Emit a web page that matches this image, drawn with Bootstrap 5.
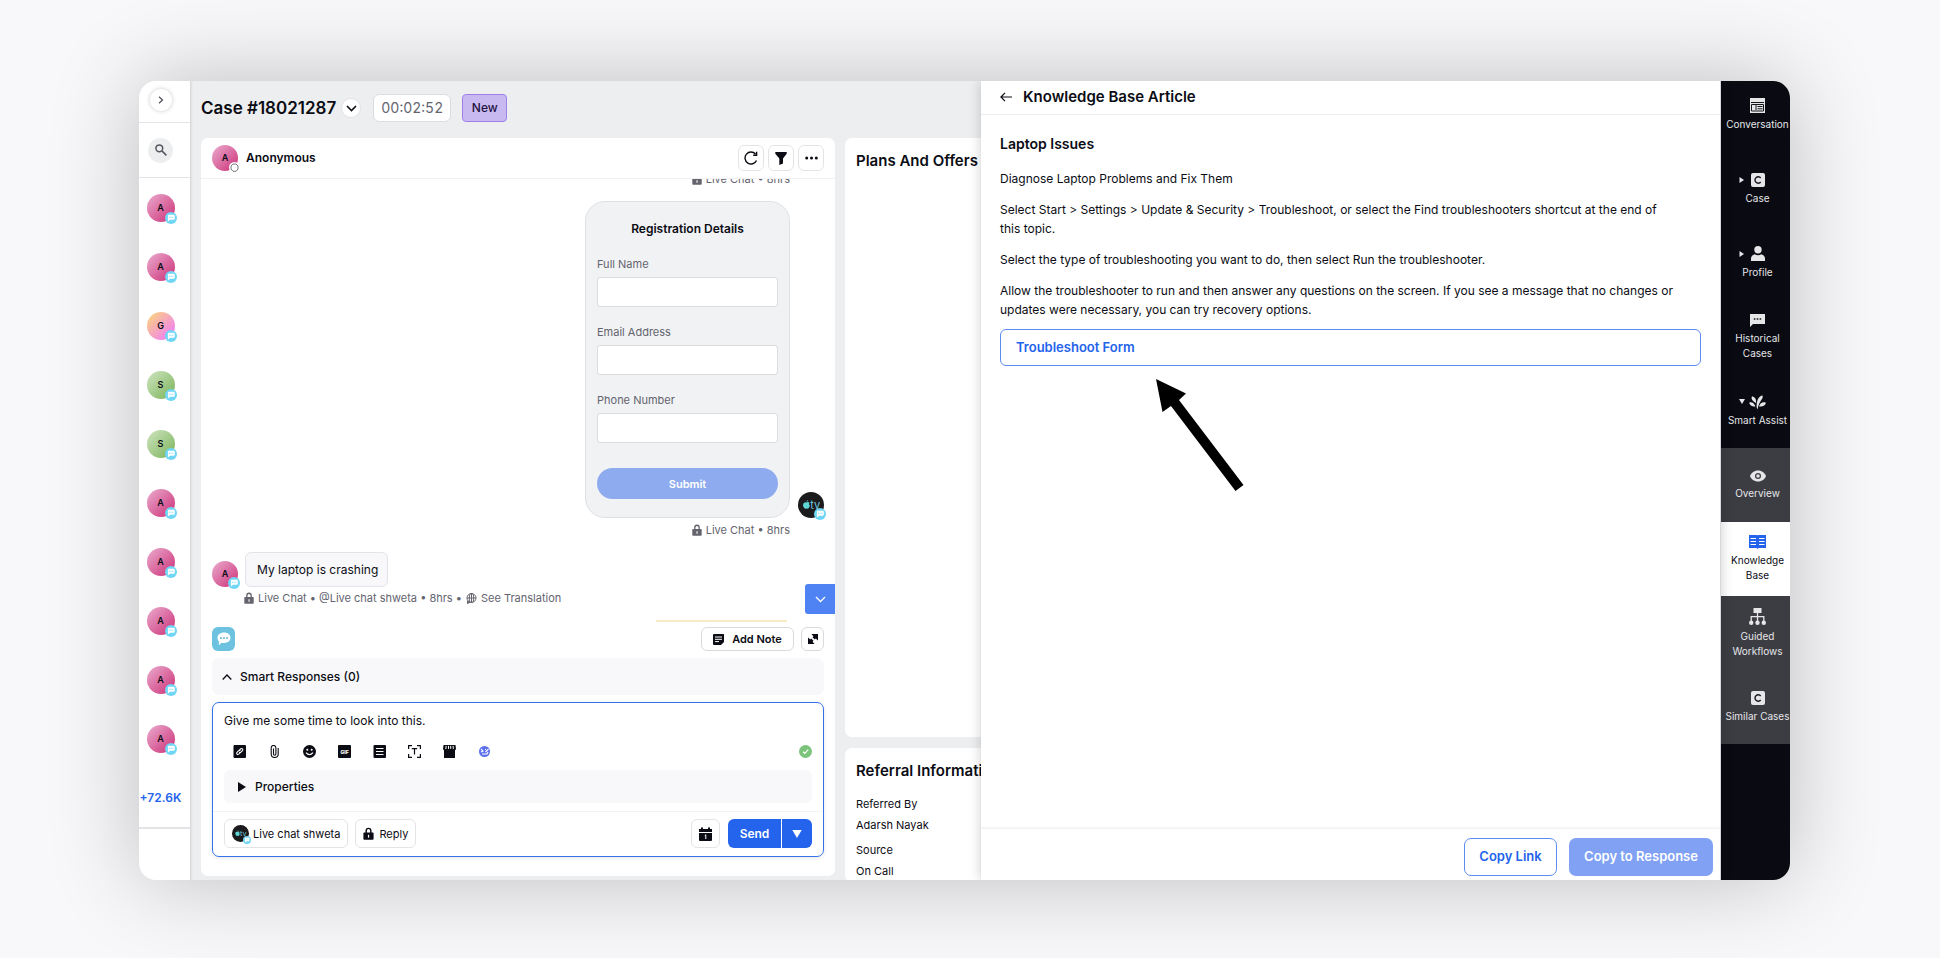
<!DOCTYPE html>
<html lang="en">
<head>
<meta charset="utf-8">
<meta name="viewport" content="width=device-width, initial-scale=1">
<title>Case #18021287</title>
<link href="https://cdn.jsdelivr.net/npm/bootstrap@5.3.0/dist/css/bootstrap.min.css" rel="stylesheet">
<style>
  :root { --ink:#0b0c14; --muted-ink:#64646f; --brand:#2463eb; --line:#e4e4e7; --canvas:#edeef0; --soft:#f8f8fa; }
  body { font-family:Inter,"Liberation Sans",sans-serif; font-size:12px; line-height:18px; color:var(--ink); background:#f8f8fa; }
  button, input, textarea { font-family:inherit; color:inherit; }
  svg { display:block; fill:currentColor; flex:none; }
  .stage { height:100vh; min-height:880px; padding:81px 150px 78px 139px; }
  .frame { border-radius:17px; box-shadow:0 0 90px rgba(0,0,0,.24); background:#fff; }
  .frame-inner { border-radius:17px; }

  /* queue rail */
  .queue { width:51px; flex:none; }
  .queue-top { height:42px; border-bottom:1px solid var(--line); padding-right:8px; }
  .queue-search { height:55px; border-bottom:1px solid var(--line); padding-right:8px; }
  .round-btn { border:0; padding:0; border-radius:50%; display:flex; align-items:center; justify-content:center; background:#fff; }
  .queue-toggle { width:22px; height:22px; box-shadow:0 0 4px rgba(0,0,0,.22); margin-top:-4px; color:#55565f; }
  .search-btn { width:25px; height:25px; background:var(--canvas); color:#55565f; }
  .queue-list { gap:31px; padding:16px 8px 0 0; }
  .queue-more { color:var(--brand); font-weight:600; font-size:12px; margin:36px 8px 0 0; text-decoration:none; }
  .queue-end { border-top:2px solid var(--line); height:53px; }

  .face { width:28px; height:28px; border-radius:50%; font-weight:600; font-size:9px; line-height:28px; text-align:center; position:relative; flex:none; border:0; padding:0; }
  .face-md { width:26px; height:26px; line-height:26px; }
  .face-sm { width:17px; height:17px; }
  .face-a { background:linear-gradient(135deg,#e9a6cb 5%,#cf3c7f 90%); }
  .face-g { background:linear-gradient(135deg,#fad083 10%,#f286ea 80%); }
  .face-s { background:linear-gradient(135deg,#cbe2bc 5%,#82b862 90%); }
  .face-tv { background:#1b1b1d; }
  .chat-dot { position:absolute; right:-2px; bottom:-2px; color:#6fd6f6; }
  .idle-dot { color:#fff; }

  /* workspace */
  .work { flex:780 1 0; background:var(--canvas); padding:0 0 0 11px; box-shadow:inset 3px 0 3px -2px rgba(0,0,0,.12); min-width:0; }
  .fit { min-height:0; min-width:0; }
  .case-bar { height:57px; padding-top:13px; flex:none; }
  .case-title { font-size:17px; line-height:28px; font-weight:600; }
  .case-menu { width:20px; height:20px; border:1px solid #e2e2e6; margin:0 12px 0 5px; }
  .timer { height:28px; padding:0 7px; background:#fff; border:1px solid #dcdce1; border-radius:6px; font-size:14px; line-height:26px; color:var(--muted-ink); font-variant-numeric:tabular-nums; }
  .status { height:28px; width:45px; margin-left:11px; background:#c9b9f1; border:1px solid #9f80ea; border-radius:4px; font-size:12px; line-height:26px; font-weight:500; color:#1f1140; text-align:center; }
  .panel-card { background:#fff; border-radius:7px; }
  .chat-head { height:41px; border-bottom:1px solid #f1f1f3; padding:0 11px; }
  .tool-btn { width:26px; height:26px; border:1px solid var(--line); border-radius:6px; background:#fff; padding:0; display:flex; align-items:center; justify-content:center; }
  .feed { padding:0 11px; position:relative; }
  .meta { color:var(--muted-ink); font-size:11px; line-height:18px; }
  .meta-out { margin:3px 34px 0 0; }
  .meta-in { margin-top:2px; }
  .msg-gap { margin-top:13px; }
  .regform { width:205px; border:1px solid #dfe0e4; border-radius:20px; background:#f1f2f4; padding:18px 11px; margin-right:8px; }
  .regform h3 { font-size:12px; line-height:18px; font-weight:600; margin:0 0 17px; text-align:center; }
  .regform label { display:block; color:var(--muted-ink); font-size:11px; line-height:18px; margin-bottom:4px; }
  .regform .form-control { height:30px; border:1px solid #dcdde1; border-radius:3px; margin-bottom:16px; padding:4px 8px; font-size:11px; }
  .submit-btn { height:31px; border:0; border-radius:16px; background:#8fabf0; color:#fff; font-weight:600; font-size:11px; margin-top:9px; }
  .bubble { background:var(--soft); border:1px solid #e3e4e8; border-radius:6px; height:35px; line-height:33px; padding:0 9px 0 11px; margin-left:7px; font-size:12px; }
  .note-edge { height:2px; width:131px; background:#fbebc5; margin:13px 37px 0 auto; }
  .jump-btn { position:absolute; right:0; bottom:8px; width:30px; height:30px; border:0; border-radius:3px 0 0 3px; background:#4f82f2; color:#fff; padding:0; display:flex; align-items:center; justify-content:center; }
  .compose-zone { padding:5px 11px 19px; }
  .channel-btn { width:23px; height:24px; border-radius:6px; border:0; padding:0; background:#6cc2df; color:#fff; display:flex; align-items:center; justify-content:center; }
  .pill-btn { height:24px; border:1px solid #d9dade; border-radius:6px; background:#fff; padding:0; font-weight:600; font-size:11px; display:flex; align-items:center; justify-content:center; }
  .pill-note { width:93px; margin-left:auto; }
  .pill-open { width:23px; margin-left:7px; }
  .smart-row { height:37px; background:var(--soft); border:0; border-radius:7px; font-size:12px; font-weight:500; padding:0 10px; margin-top:7px; }
  .composer { border:1px solid #3571ec; border-radius:7px; margin-top:7px; padding:9px 11px 8px; box-shadow:0 1px 4px rgba(0,0,0,.1); height:155px; }
  .composer textarea { border:0; resize:none; height:18px; line-height:18px; padding:0; font-size:12px; outline:0; background:transparent; overflow:hidden; display:block; width:100%; }
  .icon-row { margin-top:9px; height:24px; padding-left:8px; gap:20px; }
  .icon-row button, .plain-btn { border:0; background:none; padding:0; }
  .props-row { height:33px; background:var(--soft); border:0; border-radius:6px; font-size:12px; font-weight:500; padding:0 14px; margin-top:7px; gap:9px; }
  .send-row { border-top:1px solid #f3f3f5; margin:8px -11px 0; padding:7px 11px 0; }
  .soft-btn { height:29px; border:1px solid var(--line); border-radius:6px; background:#fff; font-size:11px; padding:0 7px; }
  .reply-btn { margin-left:7px; gap:5px; }
  .send-btn { height:29px; border:0; background:var(--brand); color:#fff; font-weight:600; font-size:12px; padding:0; }
  .send-main { width:53px; margin-right:1px; }
  .send-more { width:30px; }
  .side-col { width:136px; flex:none; margin-left:10px; white-space:nowrap; overflow:hidden; }
  .side-col .panel-card { width:180px; padding:0 11px; }
  .side-col .plans { height:599px; flex:none; padding-top:13px; }
  .side-col .referral { margin-top:11px; padding-top:13px; }
  .side-title { font-size:15px; line-height:20px; font-weight:600; margin:0 0 13px; }
  .side-col p { font-size:11px; line-height:21px; margin:0; }

  /* article panel */
  .article-pane { flex:739 1 0; background:#fff; box-shadow:0 0 12px rgba(0,0,0,.2); position:relative; min-width:0; border-right:1px solid #d8d9dd; }
  .article-head { height:34px; border-bottom:1px solid #ededf0; padding:0 0 2px 19px; }
  .article-head h2 { font-size:15px; line-height:20px; font-weight:600; margin:0 0 0 11px; }
  .article-body { padding:19px 19px 0; font-size:12px; }
  .article-body h3 { font-size:14px; line-height:20px; font-weight:600; margin:0 0 15px; }
  .article-body p { font-size:12px; line-height:19px; margin:0 25px 12px 0; }
  .form-link { height:37px; border:1px solid #5d8cf1; border-radius:6px; color:var(--brand); font-weight:600; font-size:13px; line-height:35px; padding:0 15px; text-decoration:none; margin-top:-2px; }
  .pointer { margin:13px 0 0 156px; }
  .article-foot { height:52px; border-top:1px solid #f1f1f4; box-shadow:0 -1px 3px rgba(0,0,0,.04); padding:9px 7px 4px; gap:12px; }
  .article-foot .btn { height:38px; border-radius:7px; font-size:13px; font-weight:600; padding:0; }
  .copy-link { width:93px; border:1px solid #5d8cf1; color:var(--brand); }
  .copy-resp { width:144px; background:#80a1f4; color:#fff; border:0; }

  /* tool rail */
  .tools { width:69px; flex:none; background:#090a12; }
  .tools-list { margin-top:-3px; }
  .tool-link { height:74px; color:#e6e6e8; font-size:10px; line-height:15px; text-decoration:none; padding-left:4px; text-align:center; display:flex; flex-direction:column; align-items:center; justify-content:center; white-space:nowrap; gap:4px; }
  .tool-link .glyph { display:grid; grid-template-columns:16px 16px 16px; align-items:center; justify-items:center; }
  .tool-sub { background:#3c3d43; }
  .tool-on { background:#fff; color:var(--ink); }
</style>
</head>
<body>
<svg width="0" height="0" class="position-absolute" aria-hidden="true">
  <symbol id="i-dot" viewBox="0 0 12 12"><circle cx="6" cy="6" r="6"/><path fill="#fff" d="M3.400 2.800h5.200q1.200 0 1.200 1.200v2.600q0 1.200-1.200 1.200H5.200L2.900 9.600V3.600Q3 2.800 3.400 2.800z"/><path d="M4 4.800h.9v.9H4zm1.700 0h.9v.9h-.9zm1.700 0h.9v.9h-.9z"/></symbol>
  <symbol id="i-lock" viewBox="0 0 10 12"><path d="M2.200 5V3.400a2.800 2.800 0 0 1 5.600 0V5H9q.7 0 .7.7v5.400q0 .7-.7.7H1q-.7 0-.7-.7V5.700Q.3 5 1 5zm1.300 0h3V3.400a1.500 1.500 0 0 0-3 0z"/><path fill="#fff" d="M4.500 7.200h1.100v2.600H4.500z"/></symbol>
  <symbol id="i-c" viewBox="0 0 14 14"><rect width="14" height="14" rx="2"/><path fill="none" stroke="#15161d" stroke-width="1.400" d="M9.700 5A3.200 3.200 0 1 0 9.700 9"/></symbol>
  <symbol id="i-tri" viewBox="0 0 6 6"><path d="M.5 0 5 3 .5 6z"/></symbol>
  <symbol id="i-tv" viewBox="0 0 26 26"><path fill="#5ed6d3" d="M8.500 10.500q1.700-.9 3 .3-1.300 1.200.4 3-.9 2.900-2.200 2.900l-1.100-.3-1.200.3Q5.700 16.200 4.900 13.400 5 10.500 7.200 10.200zM8.400 9.900Q8.500 8.500 10.100 8.100 10 9.700 8.400 9.900z"/><text x="12.200" y="16.600" font-size="11" font-weight="400" fill="#6fc6dc" font-family="Inter">tv</text></symbol>
</svg>

<div class="stage d-flex">
 <div class="frame flex-grow-1 d-flex">
  <div class="frame-inner flex-grow-1 d-flex overflow-hidden">

  <aside class="queue d-flex flex-column align-items-stretch">
    <div class="queue-top d-flex align-items-center justify-content-center">
      <button class="round-btn queue-toggle" aria-label="Expand"><svg width="8" height="8" viewBox="0 0 8 8" stroke="currentColor" stroke-width="1.300"><path fill="none" d="M2 .8 5.500 4 2 7.200"/></svg></button>
    </div>
    <div class="queue-search d-flex align-items-center justify-content-center">
      <button class="round-btn search-btn" aria-label="Search"><svg width="12" height="12" viewBox="0 0 12 12" stroke="currentColor" stroke-width="1.500"><circle fill="none" cx="4.300" cy="4.300" r="3.400"/><path d="m6.900 6.900 4.500 4.500"/></svg></button>
    </div>
    <div class="queue-list d-flex flex-column align-items-center">
      <button class="face face-a">A<svg class="chat-dot" width="12" height="12"><use href="#i-dot"/></svg></button>
      <button class="face face-a">A<svg class="chat-dot" width="12" height="12"><use href="#i-dot"/></svg></button>
      <button class="face face-g">G<svg class="chat-dot" width="12" height="12"><use href="#i-dot"/></svg></button>
      <button class="face face-s">S<svg class="chat-dot" width="12" height="12"><use href="#i-dot"/></svg></button>
      <button class="face face-s">S<svg class="chat-dot" width="12" height="12"><use href="#i-dot"/></svg></button>
      <button class="face face-a">A<svg class="chat-dot" width="12" height="12"><use href="#i-dot"/></svg></button>
      <button class="face face-a">A<svg class="chat-dot" width="12" height="12"><use href="#i-dot"/></svg></button>
      <button class="face face-a">A<svg class="chat-dot" width="12" height="12"><use href="#i-dot"/></svg></button>
      <button class="face face-a">A<svg class="chat-dot" width="12" height="12"><use href="#i-dot"/></svg></button>
      <button class="face face-a">A<svg class="chat-dot" width="12" height="12"><use href="#i-dot"/></svg></button>
    </div>
    <a href="#" class="queue-more text-center">+72.6K</a>
    <div class="queue-end mt-auto"></div>
  </aside>

  <main class="work d-flex flex-column">
    <header class="case-bar d-flex align-items-start">
      <h1 class="case-title mb-0">Case #18021287</h1>
      <button class="round-btn case-menu mt-1" aria-label="Case menu"><svg width="11" height="7" viewBox="0 0 11 7" stroke="currentColor" stroke-width="1.600"><path fill="none" d="m1 1 4.500 4.500L10 1"/></svg></button>
      <div class="timer">00:02:52</div>
      <div class="status">New</div>
    </header>
    <div class="d-flex flex-grow-1 fit">
      <section class="flex-grow-1 d-flex flex-column pb-1 fit">
       <div class="panel-card d-flex flex-column flex-grow-1 overflow-hidden fit">
        <div class="chat-head d-flex align-items-center flex-shrink-0">
          <div class="face face-md face-a">A<svg class="chat-dot idle-dot" width="11" height="11" viewBox="0 0 11 11"><circle cx="5.500" cy="5.500" r="5.500"/><path fill="none" stroke="#77777f" d="M4 2h3l2 2v3L7 9.300H4L2 7V4z"/></svg></div>
          <div class="ms-2 fw-semibold">Anonymous</div>
          <div class="ms-auto d-flex gap-1">
            <button class="tool-btn" aria-label="Refresh"><svg width="14" height="14" viewBox="0 0 14 14" stroke="currentColor" stroke-width="1.400"><path fill="none" d="M12.500 9.500A6 6 0 1 1 11.500 3M12.600.8v3.400H9.200"/></svg></button>
            <button class="tool-btn" aria-label="Filter"><svg width="12" height="13" viewBox="0 0 12 13"><path d="M.3 0h11.400v1.800L8 6.500v5L4.300 13V6.500L.3 1.800z"/></svg></button>
            <button class="tool-btn" aria-label="More"><svg width="13" height="4" viewBox="0 0 13 4"><circle cx="1.700" cy="2" r="1.500"/><circle cx="6.500" cy="2" r="1.500"/><circle cx="11.300" cy="2" r="1.500"/></svg></button>
          </div>
        </div>

        <div class="feed flex-grow-1 d-flex flex-column justify-content-end overflow-hidden fit">
          <div class="meta meta-out d-flex align-items-center justify-content-end flex-shrink-0"><svg class="me-1" width="10" height="12"><use href="#i-lock"/></svg>Live Chat • 8hrs</div>
          <div class="d-flex justify-content-end align-items-end msg-gap flex-shrink-0">
            <form class="regform" onsubmit="return false">
              <h3>Registration Details</h3>
              <label for="full">Full Name</label><input class="form-control" id="full" type="text">
              <label for="mail">Email Address</label><input class="form-control" id="mail" type="email">
              <label for="phone">Phone Number</label><input class="form-control" id="phone" type="tel">
              <button class="submit-btn w-100">Submit</button>
            </form>
            <div class="face face-md face-tv"><svg width="26" height="26"><use href="#i-tv"/></svg><svg class="chat-dot" width="12" height="12"><use href="#i-dot"/></svg></div>
          </div>
          <div class="meta meta-out d-flex align-items-center justify-content-end flex-shrink-0"><svg class="me-1" width="10" height="12"><use href="#i-lock"/></svg>Live Chat • 8hrs</div>
          <div class="d-flex align-items-end msg-gap flex-shrink-0">
            <div class="face face-md face-a">A<svg class="chat-dot" width="12" height="12"><use href="#i-dot"/></svg></div>
            <div class="bubble">My laptop is crashing</div>
          </div>
          <div class="meta meta-in d-flex align-items-center flex-shrink-0 ms-4 ps-1"><svg class="ms-1 me-1" width="10" height="12"><use href="#i-lock"/></svg>Live Chat • @Live chat shweta • 8hrs •<svg class="mx-1" width="11" height="11" viewBox="0 0 11 11" stroke="currentColor"><circle fill="none" cx="5.500" cy="5" r="4.500"/><path fill="none" d="M1 5h9M5.500.5v9"/><ellipse fill="none" cx="5.500" cy="5" rx="2.200" ry="4.500"/><path d="M1.500 8v2.500L4 9.300z"/></svg><a href="#" class="text-reset text-decoration-none">See Translation</a></div>
          <div class="note-edge flex-shrink-0"></div>
          <button class="jump-btn" aria-label="Jump to latest"><svg width="11" height="7" viewBox="0 0 11 7" stroke="currentColor" stroke-width="1.300"><path fill="none" d="m1 1 4.500 4.500L10 1"/></svg></button>
        </div>

        <div class="compose-zone flex-shrink-0">
          <div class="d-flex align-items-center">
            <button class="channel-btn" aria-label="Live chat"><svg width="14" height="14" viewBox="0 0 14 14"><path d="M7 .5c4 0 6.500 2.200 6.500 5.300S11 11 7 11c-1 0-1.700 0-2.400-.2L1.800 13.200 2 9.600C1 8.700.5 7.500.5 6 .5 2.800 3 .5 7 .5z"/><g fill="#4fb4d6"><circle cx="4" cy="6" r=".9"/><circle cx="7" cy="6" r=".9"/><circle cx="10" cy="6" r=".9"/></g></svg></button>
            <button class="pill-btn pill-note"><svg class="me-2" width="11" height="11" viewBox="0 0 11 11"><path d="M1 0h9.500q.5 0 .5.500V8L8 11H1q-1 0-1-1V1q0-1 1-1z"/><path stroke="#fff" d="M2 3h7M2 5.300h7M2 7.600h4"/></svg>Add Note</button>
            <button class="pill-btn pill-open" aria-label="Expand editor"><svg width="10" height="10" viewBox="0 0 10 10"><path d="M3.500 0H10v6.500L7.700 4.600 6.800 5.500 4.500 3.200 5.400 2.300zM6.500 10H0V3.500l2.300 1.900.9-.9 2.300 2.300-.9.900z"/></svg></button>
          </div>
          <button class="smart-row d-flex align-items-center w-100"><svg class="me-2" width="10" height="6" viewBox="0 0 10 6" stroke="currentColor" stroke-width="1.300"><path fill="none" d="M.7 5.500 5 1l4.300 4.500"/></svg>Smart Responses (0)</button>
          <div class="composer">
            <textarea aria-label="Reply text" rows="1">Give me some time to look into this.</textarea>
            <div class="icon-row d-flex align-items-center">
              <button aria-label="Link"><svg width="15" height="13" viewBox="0 0 15 13"><rect x="1.500" width="12.500" height="13" rx="1"/><path fill="none" stroke="#fff" stroke-width="1.100" d="m7 5.500 1.700-1.700q1-.7 1.800 0t0 1.800L8.900 7.200q-.9.700-1.700 0M8.500 7.300 6.700 9.100q-1 .7-1.700 0t0-1.700l1.700-1.700q.9-.6 1.700.1"/></svg></button>
              <button aria-label="Attach"><svg width="15" height="13" viewBox="0 0 15 13"><path fill="none" stroke="#0b0c14" stroke-width="1.100" d="M11.200 3v6a3.500 3.500 0 0 1-7 0V2.800a2.300 2.300 0 0 1 4.700 0V9a1.200 1.200 0 0 1-2.400 0V3.500"/></svg></button>
              <button aria-label="Emoji"><svg width="15" height="13" viewBox="0 0 15 13"><circle cx="7.500" cy="6.500" r="6.500"/><circle fill="#fff" cx="5.300" cy="4.800" r="1"/><circle fill="#fff" cx="9.700" cy="4.800" r="1"/><path fill="none" stroke="#fff" stroke-width="1.200" d="M4 7.700q3.500 4 7 0"/></svg></button>
              <button aria-label="GIF"><svg width="15" height="13" viewBox="0 0 15 13"><rect x="1" width="13" height="13" rx="1"/><text x="7.500" y="8.500" text-anchor="middle" fill="#fff" font-size="5" font-weight="800" font-family="Inter">GIF</text></svg></button>
              <button aria-label="Template"><svg width="15" height="13" viewBox="0 0 15 13"><rect x="1.500" width="12.500" height="13" rx="1"/><path stroke="#fff" stroke-width="1.200" d="M4 3.500h7.500M4 6.500h7.500M4 9.500h7.500"/></svg></button>
              <button aria-label="Text field"><svg width="15" height="13" viewBox="0 0 15 13"><path fill="none" stroke="#0b0c14" stroke-width="1.200" d="M1.600 4V.6H5M10 .6h3.400V4M13.400 9v3.400H10M5 12.400H1.600V9M4.800 3.600h5.400M7.500 3.600v6"/></svg></button>
              <button aria-label="Catalog"><svg width="15" height="13" viewBox="0 0 15 13"><path d="M1.500 0h12l.5 4.300-1 .9V13H2V5.200l-1-.9z"/><path stroke="#fff" d="M4.200.9 3.800 4M6.500.9v3M8.700.9v3M11 .9l.4 3"/></svg></button>
              <button aria-label="AI assist"><svg width="15" height="13" viewBox="0 0 15 13"><circle cx="7.500" cy="6.500" r="5.500" fill="#5c70ee"/><path fill="none" stroke="#fff" stroke-width="1.100" d="m4 4 2 2-2 1M8 4.500h1M8.500 7l3-3M5 9h5l1-2"/></svg></button>
              <svg class="ms-auto" width="13" height="13" viewBox="0 0 13 13"><circle cx="6.500" cy="6.500" r="6.500" fill="#7cc47c"/><path fill="none" stroke="#fff" stroke-width="1.200" d="m4 6.700 1.800 1.600L9.200 4.700"/></svg>
            </div>
            <button class="props-row d-flex align-items-center w-100"><svg width="8" height="10" viewBox="0 0 8 10"><path d="M0 0 8 5 0 10z"/></svg>Properties</button>
            <div class="send-row d-flex align-items-center">
              <button class="soft-btn d-flex align-items-center"><span class="face face-sm face-tv me-1"><svg width="17" height="17"><use href="#i-tv"/></svg><svg class="chat-dot" width="8" height="8"><use href="#i-dot"/></svg></span>Live chat shweta</button>
              <button class="soft-btn reply-btn d-flex align-items-center"><svg width="11" height="13"><use href="#i-lock"/></svg>Reply</button>
              <button class="soft-btn ms-auto me-2" aria-label="Schedule"><svg width="13" height="14" viewBox="0 0 13 14"><path d="M0 2h2V.5h2V2h5V.5h2V2h2v3H0zM0 6h13v7q0 1-1 1H1q-1 0-1-1z"/><path fill="none" stroke="#fff" d="m5.800 8.500 1-.7V12"/></svg></button>
              <button class="send-btn send-main rounded-start-2">Send</button>
              <button class="send-btn send-more rounded-end-2 d-flex align-items-center justify-content-center" aria-label="Send options"><svg width="10" height="8" viewBox="0 0 10 8"><path d="M.3 0h9.400L5 8z"/></svg></button>
            </div>
          </div>
        </div>
       </div>
      </section>

      <section class="side-col d-flex flex-column">
        <div class="panel-card plans"><h2 class="side-title">Plans And Offers</h2></div>
        <div class="panel-card referral flex-grow-1">
          <h2 class="side-title">Referral Information</h2>
          <p>Referred By</p><p class="mb-1">Adarsh Nayak</p>
          <p>Source</p><p>On Call</p>
        </div>
      </section>
    </div>
  </main>

  <section class="article-pane d-flex flex-column">
    <header class="article-head d-flex align-items-center">
      <button class="plain-btn" aria-label="Back"><svg width="12" height="10" viewBox="0 0 12 10" stroke="currentColor" stroke-width="1.200"><path fill="none" d="M12 5H1M5 .8.900 5 5 9.200"/></svg></button>
      <h2>Knowledge Base Article</h2>
    </header>
    <article class="article-body flex-grow-1">
      <h3>Laptop Issues</h3>
      <p>Diagnose Laptop Problems and Fix Them</p>
      <p>Select Start &gt; Settings &gt; Update &amp; Security &gt; Troubleshoot, or select the Find troubleshooters shortcut at the end of this topic.</p>
      <p>Select the type of troubleshooting you want to do, then select Run the troubleshooter.</p>
      <p>Allow the troubleshooter to run and then answer any questions on the screen. If you see a message that no changes or updates were necessary, you can try recovery options.</p>
      <a href="#" class="form-link d-block">Troubleshoot Form</a>
      <svg class="pointer" width="88" height="114" viewBox="0 0 88 114"><path fill="#000" d="M0 0 30 14.500 23 21 87.500 106 79.500 112 15 27 6.500 33z"/></svg>
    </article>
    <footer class="article-foot d-flex justify-content-end">
      <button class="btn copy-link">Copy Link</button>
      <button class="btn copy-resp">Copy to Response</button>
    </footer>
  </section>

  <nav class="tools">
   <div class="tools-list">
    <a href="#" class="tool-link"><svg width="15" height="15" viewBox="0 0 15 15"><rect width="15" height="15"/><path fill="none" stroke="#15161d" d="M1 4.500h13M1.500 6.500h12v6.500h-12zM7.500 8.500h5M7.500 10.800h5"/><path fill="#15161d" d="M5.500 7h1v5h-1z"/></svg>Conversation</a>
    <a href="#" class="tool-link"><span class="glyph"><svg width="6" height="6"><use href="#i-tri"/></svg><svg width="14" height="14"><use href="#i-c"/></svg></span>Case</a>
    <a href="#" class="tool-link"><span class="glyph"><svg width="6" height="6"><use href="#i-tri"/></svg><svg width="14" height="15" viewBox="0 0 14 15"><circle cx="7" cy="3.800" r="3.700"/><path d="M0 15v-2.500q0-2.600 3.600-4.200Q7 10.300 10.400 8.300 14 9.900 14 12.500V15z"/></svg></span>Profile</a>
    <a href="#" class="tool-link"><svg width="15" height="13" viewBox="0 0 15 13"><path d="M0 0h15v10H3L0 13z"/><path fill="#15161d" d="M3.800 4.200h1.600v1.600H3.800zm2.900 0h1.600v1.600H6.700zm2.900 0h1.600v1.600H9.600z"/></svg><span>Historical<br>Cases</span></a>
    <a href="#" class="tool-link"><span class="glyph"><svg width="6" height="5" viewBox="0 0 6 5"><path d="M0 0h6L3 5z"/></svg><svg width="17" height="14" viewBox="0 0 17 14"><path d="M8 13.800C7 9 8 2 13.200.2 15.500 3.500 9.500 6 8.800 13.800zM3 1.200C6.500 2 7.500 5 7 8 4.500 6.500 1.500 4.500 3 1.200zM.3 7.500C3.500 6.500 5.500 9 6.500 11.500 4 12 .5 10.500.3 7.500zM10 11.500c.5-2.500 3-5 6.700-4C17 10.500 13 12 10 11.500z"/></svg></span>Smart Assist</a>
    <a href="#" class="tool-link tool-sub"><svg width="16" height="12" viewBox="0 0 16 12"><path d="M8 .5c4 0 7 2.500 8 5.500-1 3-4 5.500-8 5.500S1 9 0 6C1 3 4 .5 8 .5z"/><circle cx="8" cy="6" r="2.400" fill="none" stroke="#3c3d43" stroke-width="1.300"/></svg>Overview</a>
    <a href="#" class="tool-link tool-on"><svg width="17" height="14" viewBox="0 0 17 14"><path fill="#2463eb" d="M0 0h8l.5.500L9 0h8v13H9.500l-1 1-1-1H0z"/><path stroke="#fff" stroke-width="1.100" d="M1.500 3.500h5.500M1.500 6.500h5.500M1.500 9.500h5.500M10 3.500h5.500M10 6.500h5.500M10 9.500h5.500"/></svg><span>Knowledge<br>Base</span></a>
    <a href="#" class="tool-link tool-sub"><svg width="17" height="17" viewBox="0 0 17 17"><path d="M4.500 0h8v5h-8z"/><path fill="none" stroke="currentColor" stroke-width="1.300" d="M8.500 5v10M2.200 15V8.700h12.600V15"/><circle cx="2.200" cy="14.700" r="2.200"/><circle cx="8.500" cy="14.700" r="2.200"/><circle cx="14.800" cy="14.700" r="2.200"/></svg><span>Guided<br>Workflows</span></a>
    <a href="#" class="tool-link tool-sub"><svg width="14" height="14"><use href="#i-c"/></svg>Similar Cases</a>
   </div>
  </nav>
  </div>
 </div>
</div>
<script src="https://cdn.jsdelivr.net/npm/bootstrap@5.3.0/dist/js/bootstrap.bundle.min.js"></script>
</body>
</html>
